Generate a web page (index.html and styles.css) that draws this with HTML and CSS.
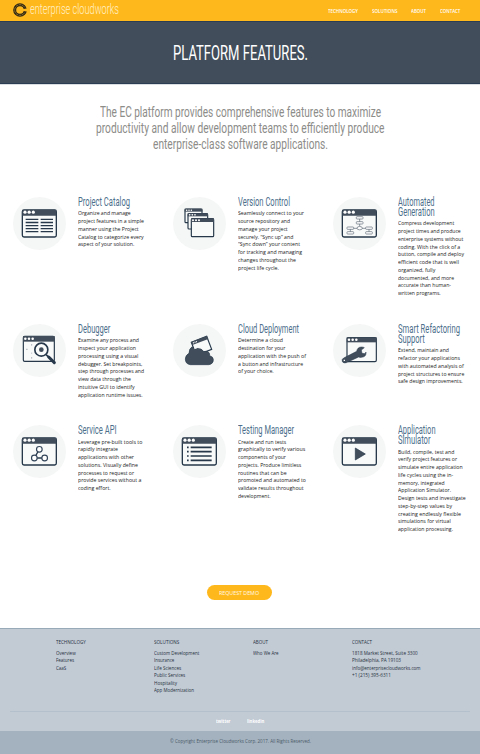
FILE: index.html
```html
<!DOCTYPE html>
<html lang="en">
<head>
<meta charset="utf-8">
<title>Enterprise Cloudworks - Platform Features</title>
<link rel="stylesheet" href="styles.css">
</head>
<body>
<svg class="defs" width="0" height="0" aria-hidden="true">
  <symbol id="window" viewBox="0 0 159 159">
    <rect x="28" y="39" width="102" height="81" rx="5" fill="#f8f9f9" stroke="#26384a" stroke-width="4"/>
    <path d="M28 56V42q0-4 4-4h94q4 0 4 4v14z" fill="#414d5a"/>
    <g fill="#fff"><circle cx="36" cy="45.500" r="4.800"/><circle cx="48.500" cy="45.500" r="4.800"/><circle cx="61" cy="45.500" r="4.800"/></g>
  </symbol>
</svg>

<header class="topbar">
  <a class="brand">
    <svg class="mark" viewBox="0 0 42 42"><circle cx="21" cy="21" r="16" fill="none" stroke="#2b2618" stroke-width="9"/><circle cx="21" cy="21" r="16" fill="none" stroke="#ffb81c" stroke-width="1.500" stroke-dasharray="8 2"/><path d="M27 17h15v8H27z" fill="#ffb81c"/><path d="M30 14l7 2M30 28l7-2" stroke="#2b2618" stroke-width="3"/></svg>
    <span class="fit" data-w="89">enterprise cloudworks</span>
  </a>
  <nav class="nav">
    <a class="fit" data-w="30">TECHNOLOGY</a>
    <a class="fit" data-w="25.5">SOLUTIONS</a>
    <a class="fit" data-w="15">ABOUT</a>
    <a class="fit" data-w="20.3">CONTACT</a>
  </nav>
</header>

<section class="hero"><h1 class="fit" data-w="135">PLATFORM FEATURES.</h1></section>

<p class="intro">
  <span class="fit" data-w="281">The EC platform provides comprehensive features to maximize</span>
  <span class="fit" data-w="288.5">productivity and allow development teams to efficiently produce</span>
  <span class="fit" data-w="175">enterprise-class software applications.</span>
</p>

<main class="features">
  <article class="feature">
    <svg class="icon" viewBox="0 0 159 159"><circle cx="79.500" cy="79.500" r="79.500"/><use href="#window"/>
      <path class="s" d="M38 67h38M38 76.500h38M38 86h38M38 95h38M38 104h38M83 67h37M83 76.500h37M83 86h37M83 95h37M83 104h37"/></svg>
    <div class="text">
      <h2><span class="fit" data-w="52">Project Catalog</span></h2>
      <p><span class="fit" data-w="52.7">Organize and manage</span><span class="fit" data-w="66">project features in a simple</span><span class="fit" data-w="60.7">manner using the Project</span><span class="fit" data-w="65.7">Catalog to categorize every</span><span class="fit" data-w="56.3">aspect of your solution.</span></p>
    </div>
  </article>
  <article class="feature">
    <svg class="icon" viewBox="0 0 159 159"><circle cx="79.500" cy="79.500" r="79.500"/>
      <g class="w"><rect x="36" y="36" width="51" height="41" rx="3"/><path class="bar" d="M35 35h53v9H35z"/><rect x="45" y="50" width="59" height="46" rx="3"/><path class="bar" d="M44 49h61v9H44z"/><rect x="55" y="65" width="67" height="54" rx="3"/><path class="bar" d="M54 64h69v11H54z"/></g>
      <g class="dots"><circle cx="41" cy="39.500" r="2.300"/><circle cx="48" cy="39.500" r="2.300"/><circle cx="55" cy="39.500" r="2.300"/><circle cx="50" cy="53.500" r="2.500"/><circle cx="58" cy="53.500" r="2.500"/><circle cx="66" cy="53.500" r="2.500"/><circle cx="60" cy="69.500" r="3"/><circle cx="69" cy="69.500" r="3"/><circle cx="78" cy="69.500" r="3"/></g></svg>
    <div class="text">
      <h2><span class="fit" data-w="52">Version Control</span></h2>
      <p><span class="fit" data-w="66">Seamlessly connect to your</span><span class="fit" data-w="52">source repository and</span><span class="fit" data-w="49.7">manage your project</span><span class="fit" data-w="55.3">securely. “Sync up” and</span><span class="fit" data-w="62">“Sync down” your content</span><span class="fit" data-w="64">for tracking and managing</span><span class="fit" data-w="58">changes throughout the</span><span class="fit" data-w="41">project life cycle.</span></p>
    </div>
  </article>
  <article class="feature">
    <svg class="icon" viewBox="0 0 159 159"><circle cx="79.500" cy="79.500" r="79.500"/><use href="#window"/>
      <g class="n"><path d="M80 66v22M52 94h56M52 94v12M108 94v12"/><rect x="70" y="59" width="20" height="7" rx="2"/><rect x="70" y="74" width="20" height="7" rx="2"/><rect x="42" y="90" width="20" height="7" rx="2"/><rect x="42" y="104" width="20" height="7" rx="2"/><rect x="98" y="90" width="20" height="7" rx="2"/><rect x="98" y="104" width="20" height="7" rx="2"/><ellipse cx="80" cy="93.500" rx="8" ry="5"/></g></svg>
    <div class="text">
      <h2><span class="fit" data-w="36.5">Automated</span><span class="fit" data-w="36.7">Generation</span></h2>
      <p><span class="fit" data-w="56.3">Compress development</span><span class="fit" data-w="62.7">project times and produce</span><span class="fit" data-w="65.3">enterprise systems without</span><span class="fit" data-w="62.3">coding. With the click of a</span><span class="fit" data-w="66">button, compile and deploy</span><span class="fit" data-w="61">efficient code that is well</span><span class="fit" data-w="37.3">organized, fully</span><span class="fit" data-w="56">documented, and more</span><span class="fit" data-w="53">accurate than human-</span><span class="fit" data-w="42.7">written programs.</span></p>
    </div>
  </article>

  <article class="feature">
    <svg class="icon" viewBox="0 0 159 159"><circle cx="79.500" cy="79.500" r="79.500"/>
      <g class="w"><rect x="31" y="37" width="93" height="75" rx="4"/><path class="bar" d="M30 36h95v17H30z"/></g>
      <g class="dots"><circle cx="37" cy="44" r="3.800"/><circle cx="48" cy="44" r="3.800"/><circle cx="59" cy="44" r="3.800"/></g>
      <path d="M39 76h5M56 60v5M56 99v5M56 86v3" stroke="#8b959e" stroke-width="2"/>
      <path d="M99 92l10 9" stroke="#26384a" stroke-width="5"/><path d="M107 99l17 17" stroke="#26384a" stroke-width="9" stroke-linecap="round"/>
      <circle class="lens" cx="85" cy="77" r="19.500"/><circle class="spot" cx="85" cy="77" r="7"/></svg>
    <div class="text">
      <h2><span class="fit" data-w="32.3">Debugger</span></h2>
      <p><span class="fit" data-w="61">Examine any process and</span><span class="fit" data-w="58">inspect your application</span><span class="fit" data-w="60.3">processing using a visual</span><span class="fit" data-w="64.3">debugger. Set breakpoints,</span><span class="fit" data-w="66">step through processes and</span><span class="fit" data-w="53">view data through the</span><span class="fit" data-w="56.7">intuitive GUI to identify</span><span class="fit" data-w="64.7">application runtime issues.</span></p>
    </div>
  </article>
  <article class="feature">
    <svg class="icon" viewBox="0 0 159 159"><circle cx="79.500" cy="79.500" r="79.500"/>
      <g class="w"><path d="M55 55l46-18 15 39-46 18z"/><path class="bar" d="M54 54l48-18 4 9-48 18z"/></g>
      <path d="M60 57l12-4.500" stroke="#fff" stroke-width="3.500" stroke-dasharray="3 2"/>
      <path d="M52 122q-15-2-15-17 0-11 11-17 0-15 10-20 4 6 8 7 5-2 9-2 10-1 17 9 8-3 14 2 5 4 4 11 11 3 11 12 0 13-14 15z" fill="#414d5a" stroke="#26384a" stroke-width="2"/>
      <path d="M64 74q10-6 19-2 6 2 10 8l12-4" fill="none" stroke="#f5f7f6" stroke-width="3"/></svg>
    <div class="text">
      <h2><span class="fit" data-w="61">Cloud Deployment</span></h2>
      <p><span class="fit" data-w="45">Determine a cloud</span><span class="fit" data-w="47.3">destination for your</span><span class="fit" data-w="68">application with the push of</span><span class="fit" data-w="65">a button and infrastructure</span><span class="fit" data-w="35.7">of your choice.</span></p>
    </div>
  </article>
  <article class="feature">
    <svg class="icon" viewBox="0 0 159 159"><circle cx="79.500" cy="79.500" r="79.500"/>
      <g class="w"><rect x="42" y="41" width="88" height="72" rx="4"/><path class="bar" d="M41 40h90v15H41z"/></g>
      <g class="dots"><circle cx="48" cy="47" r="3.800"/><circle cx="59" cy="47" r="3.800"/><circle cx="70" cy="47" r="3.800"/></g>
      <path d="M28 113q-3-7 4-11l39-20q2-13 15-13 5 0 8 2l-9 7 2 10 9 1 3-5q2 14-13 16-6 1-9-1l-37 17q-8 3-12-3z" fill="#414d5a" stroke="#26384a" stroke-width="1.500"/><path d="M32 109h4" stroke="#fff" stroke-width="4"/></svg>
    <div class="text">
      <h2><span class="fit" data-w="62">Smart Refactoring</span><span class="fit" data-w="26.7">Support</span></h2>
      <p><span class="fit" data-w="51">Extend, maintain and</span><span class="fit" data-w="62">refactor your applications</span><span class="fit" data-w="65.7">with automated analysis of</span><span class="fit" data-w="66.3">project structures to ensure</span><span class="fit" data-w="64.7">safe design improvements.</span></p>
    </div>
  </article>

  <article class="feature">
    <svg class="icon" viewBox="0 0 159 159"><circle cx="79.500" cy="79.500" r="79.500"/><use href="#window"/>
      <path class="s" d="M79 73L64 99h31"/><g class="n big"><circle cx="79" cy="73" r="8.500"/><circle cx="64" cy="99" r="8.500"/><circle cx="95" cy="99" r="8.500"/></g></svg>
    <div class="text">
      <h2><span class="fit" data-w="38.7">Service API</span></h2>
      <p><span class="fit" data-w="64.3">Leverage pre-built tools to</span><span class="fit" data-w="40">rapidly integrate</span><span class="fit" data-w="56">applications with other</span><span class="fit" data-w="60">solutions. Visually define</span><span class="fit" data-w="56">processes to request or</span><span class="fit" data-w="63.3">provide services without a</span><span class="fit" data-w="32.7">coding effort.</span></p>
    </div>
  </article>
  <article class="feature">
    <svg class="icon" viewBox="0 0 159 159"><circle cx="79.500" cy="79.500" r="79.500"/><use href="#window"/>
      <path class="s thick" d="M42 67h5M42 80h5M42 93h5M42 106h5M53 67h63M53 80h63M53 93h63M53 106h63"/></svg>
    <div class="text">
      <h2><span class="fit" data-w="56">Testing Manager</span></h2>
      <p><span class="fit" data-w="48.2">Create and run tests</span><span class="fit" data-w="67.2">graphically to verify various</span><span class="fit" data-w="47.9">components of your</span><span class="fit" data-w="63.3">projects. Produce limitless</span><span class="fit" data-w="48.6">routines that can be</span><span class="fit" data-w="67.9">promoted and automated to</span><span class="fit" data-w="65.6">validate results throughout</span><span class="fit" data-w="32.6">development.</span></p>
    </div>
  </article>
  <article class="feature">
    <svg class="icon" viewBox="0 0 159 159"><circle cx="79.500" cy="79.500" r="79.500"/><use href="#window"/>
      <path d="M67 69v36l30-18z" fill="#414d5a" stroke="#26384a" stroke-width="2"/></svg>
    <div class="text">
      <h2><span class="fit" data-w="37.5">Application</span><span class="fit" data-w="32.5">Simulator</span></h2>
      <p><span class="fit" data-w="56.3">Build, compile, test and</span><span class="fit" data-w="59">verify project features or</span><span class="fit" data-w="64.7">simulate entire application</span><span class="fit" data-w="55.3">life cycles using the in-</span><span class="fit" data-w="46.7">memory, integrated</span><span class="fit" data-w="53">Application Simulator.</span><span class="fit" data-w="67.7">Design tests and investigate</span><span class="fit" data-w="54">step-by-step values by</span><span class="fit" data-w="63">creating endlessly flexible</span><span class="fit" data-w="52.7">simulations for virtual</span><span class="fit" data-w="55">application processing.</span></p>
    </div>
  </article>
</main>

<a class="demo"><span class="fit" data-w="40">REQUEST DEMO</span></a>

<footer class="footer">
  <div class="columns">
    <div class="col"><h3 class="fit" data-w="29.7">TECHNOLOGY</h3><a class="fit" data-w="19.7">Overview</a><a class="fit" data-w="18">Features</a><a class="fit" data-w="10.3">CaaS</a></div>
    <div class="col"><h3 class="fit" data-w="25.3">SOLUTIONS</h3><a class="fit" data-w="45.3">Custom Development</a><a class="fit" data-w="20.3">Insurance</a><a class="fit" data-w="27.3">Life Sciences</a><a class="fit" data-w="31.3">Public Services</a><a class="fit" data-w="23">Hospitality</a><a class="fit" data-w="40">App Modernization</a></div>
    <div class="col"><h3 class="fit" data-w="15">ABOUT</h3><a class="fit" data-w="25.5">Who We Are</a></div>
    <div class="col"><h3 class="fit" data-w="20">CONTACT</h3><span class="fit" data-w="65.7">1818 Market Street, Suite 3300</span><span class="fit" data-w="49">Philadelphia, PA 19103</span><a class="fit" data-w="68.5">info@enterprisecloudworks.com</a><span class="fit" data-w="39">+1 (215) 395-6311</span></div>
  </div>
  <div class="social"><a class="fit" data-w="14.5">twitter</a><a class="fit" data-w="17.3">linkedin</a></div>
  <div class="legal"><span class="fit" data-w="141">© Copyright Enterprise Cloudworks Corp. 2017. All Rights Reserved.</span></div>
</footer>
<script src="fit.js"></script>
</body>
</html>
```
FILE: styles.css
```css
* { box-sizing: border-box; margin: 0; padding: 0; }
body { width: 480px; height: 754px; overflow: hidden; background: #fff; font-family: "Open Sans", "Noto Sans", sans-serif; font-size: 5.6px; color: #222; }
.defs { display: block; }
.fit { display: block; flex: none; white-space: nowrap; transform-origin: 0 50%; }

.topbar { display: flex; justify-content: space-between; height: 22px; padding: 0 20px 0 13px; background: #ffb81c; border-bottom: 1px solid #2b3d52; }
.brand { display: flex; gap: 3px; height: 19px; align-items: center; color: #fff0c8; font: 300 14.5px/19px Roboto, sans-serif; }
.mark { width: 14px; height: 14px; }
.nav { display: flex; gap: 13.800px; height: 21px; align-items: center; color: #fff; font-size: 5.6px; font-weight: 600; }

.hero { display: flex; justify-content: center; height: 62px; padding-top: 1px; align-items: center; background: #414d5a; border-bottom: 1px solid #2b3d52; }
.hero h1 { color: #fff; font: 400 21px/24px Roboto, sans-serif; }

.intro { display: flex; flex-direction: column; align-items: center; height: 113px; padding-top: 19px; border-top: 1px solid #dcdfe2; color: #8c8c89; font: 400 15.300px/16px Roboto, sans-serif; }

.features { display: grid; grid-template-columns: repeat(3, 160px); grid-template-rows: 127px 101.3px 160px; }
.feature { display: flex; gap: 12px; padding-left: 13px; align-items: flex-start; }
.icon { flex: none; width: 53px; height: 53px; }
.icon > circle { fill: #f5f7f6; }
.icon .s { fill: none; stroke: #26384a; stroke-width: 4; }
.icon .thick { stroke-width: 5; }
.icon .w { fill: #f8f9f9; stroke: #26384a; stroke-width: 3.500; }
.icon .bar { fill: #414d5a; stroke: none; }
.icon .dots { fill: #fff; }
.icon .n { fill: #fff; stroke: #5b6874; stroke-width: 2; }
.icon .big { stroke: #34465a; stroke-width: 3.5; }
.icon > .lens { fill: #fafbfb; stroke: #26384a; stroke-width: 5; }
.icon > .spot { fill: #414d5a; }
.text h2 { display: flex; flex-direction: column; align-items: flex-start; margin-bottom: 3.3px; color: #4d6f8c; font: 400 12px/10px Roboto, sans-serif; }
.text p { display: flex; flex-direction: column; align-items: flex-start; line-height: 7.75px; }

.demo { display: flex; align-items: center; justify-content: center; width: 64.500px; height: 14.500px; margin: 0 0 28.200px 207px; border-radius: 8px; background: #ffb81c; color: #fff8e6; }

.footer { height: 126px; border-top: 1.500px solid #98a9b8; background: #c2cad4; color: #27323e; font-size: 5.500px; }
.columns { display: grid; grid-template-columns: repeat(4, 98.700px); height: 83px; margin: 0 10px; padding: 10.500px 0 0 45.700px; border-bottom: 1px solid #b4c1cd; }
.col { display: flex; flex-direction: column; align-items: flex-start; line-height: 7.400px; }
.col h3 { margin-bottom: 3px; font-size: inherit; font-weight: 400; }
.social { display: flex; justify-content: center; gap: 17px; height: 19.500px; line-height: 19px; color: #fff; font-weight: 700; }
.legal { display: flex; justify-content: center; height: 23.500px; line-height: 21px; background: #a4b2bf; color: #4b5a68; }
```
FILE: fit.js
```js
// Condense or widen each label to its set width and keep the flow width in step.
document.querySelectorAll('.fit').forEach(function (el) {
  var target = parseFloat(el.dataset.w);
  var natural = el.getBoundingClientRect().width;
  el.style.transform = 'scaleX(' + target / natural + ')';
  el.style.marginRight = (target - natural) + 'px';
});
```
